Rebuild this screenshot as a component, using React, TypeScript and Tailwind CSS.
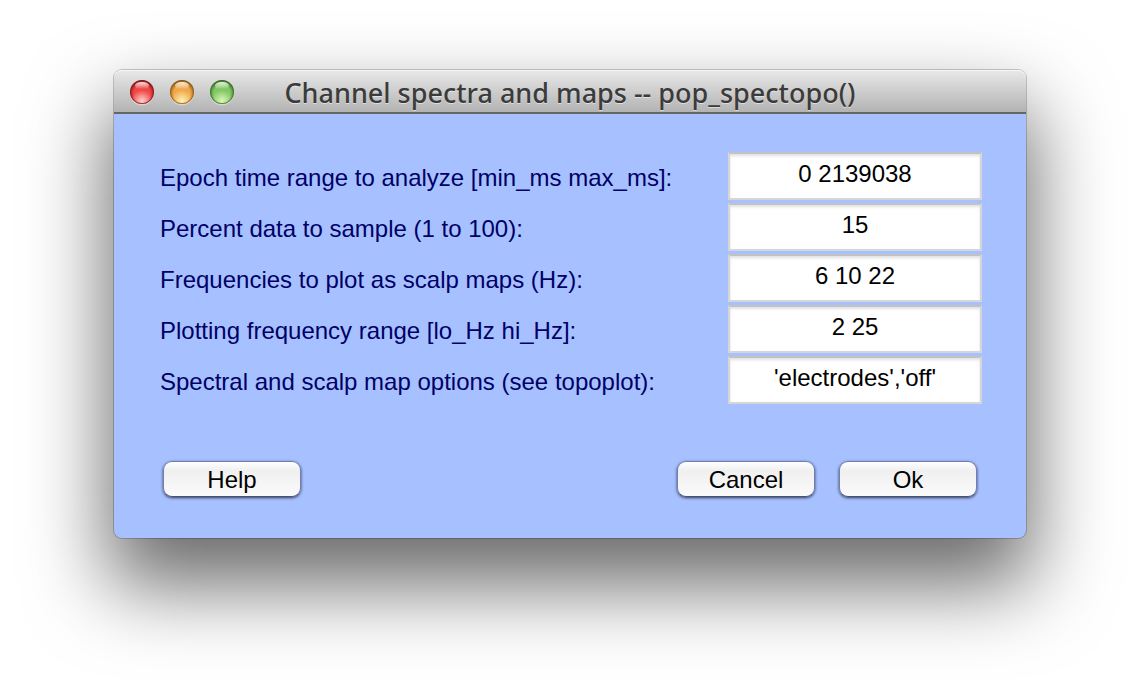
import React from "react";

type Light = { name: string; edge: string; mid: string; glow: string };

const lights: Light[] = [
  { name: "Close", edge: "#7d1212", mid: "#f04646", glow: "#ffd3d0" },
  { name: "Minimize", edge: "#85500f", mid: "#f0a94a", glow: "#fff3b8" },
  { name: "Zoom", edge: "#33661f", mid: "#82c765", glow: "#dcf8b8" },
];

const fields = [
  { id: "range", label: "Epoch time range to analyze [min_ms max_ms]:", value: "0 2139038" },
  { id: "percent", label: "Percent data to sample (1 to 100):", value: "15" },
  { id: "maps", label: "Frequencies to plot as scalp maps (Hz):", value: "6 10 22" },
  { id: "freq", label: "Plotting frequency range [lo_Hz hi_Hz]:", value: "2 25" },
  { id: "options", label: "Spectral and scalp map options (see topoplot):", value: "'electrodes','off'" },
];

function WindowLight({ name, edge, mid, glow }: Light) {
  return (
    <button type="button" aria-label={name} className="size-6">
      <svg viewBox="0 0 24 24" className="size-6 overflow-visible">
        <defs>
          <radialGradient id={`${name}-body`} cx="12" cy="13.5" r="13.5" gradientUnits="userSpaceOnUse">
            <stop offset="0.62" stopColor={mid} />
            <stop offset="1" stopColor={edge} />
          </radialGradient>
          <radialGradient id={`${name}-glow`} cx="12" cy="21" r="11" gradientUnits="userSpaceOnUse">
            <stop offset="0" stopColor={glow} />
            <stop offset="1" stopColor={glow} stopOpacity="0" />
          </radialGradient>
          <linearGradient id={`${name}-shine`} x1="0" y1="2" x2="0" y2="9" gradientUnits="userSpaceOnUse">
            <stop offset="0" stopColor="#fff" stopOpacity="0.9" />
            <stop offset="1" stopColor="#fff" stopOpacity="0" />
          </linearGradient>
        </defs>
        <circle cx="12" cy="13.5" r="12" fill="#fff" opacity="0.35" />
        <circle cx="12" cy="12" r="12" fill={`url(#${name}-body)`} />
        <circle cx="12" cy="12.3" r="11" fill={`url(#${name}-glow)`} />
        <circle cx="12" cy="12" r="11.6" fill="none" stroke={edge} strokeWidth="0.8" opacity="0.6" />
        <ellipse cx="12" cy="5.8" rx="7" ry="3.8" fill={`url(#${name}-shine)`} />
      </svg>
    </button>
  );
}

function PushButton({ children }: { children: React.ReactNode }) {
  return (
    <button
      type="button"
      className="h-9 w-[138px] rounded-[9px] border border-[#6f7fb0] border-b-[#4a5470] bg-linear-to-b from-white via-[#f0f0f0] via-25% to-[#fafafa] pt-px text-2xl leading-none text-black shadow-[0_1px_3px_rgba(20,25,50,0.8)]"
    >
      {children}
    </button>
  );
}

export default function App() {
  return (
    <main className="min-h-screen overflow-hidden bg-white px-[114px] py-[70px] font-['Liberation_Sans',Arial,sans-serif]">
      <section className="rounded-lg bg-[#a7c0ff] shadow-[0_0_0_1px_rgba(0,0,0,0.2),0_42px_80px_6px_rgba(0,0,0,0.58)]">
        <header className="grid h-11 grid-cols-[1fr_auto_1fr] items-center rounded-t-lg border-b-2 border-[#666763] bg-linear-to-b from-[#e9e9e9] to-[#b3b3b3] px-4 pt-0.5 shadow-[inset_0_1px_0_#f6f6f6]">
          <div className="flex gap-4">
            {lights.map((light) => (
              <WindowLight key={light.name} {...light} />
            ))}
          </div>
          <h1 className="font-['Noto_Sans',sans-serif] text-[27px] leading-none font-medium whitespace-nowrap text-[#3b3b3b] [text-shadow:0_1px_0_rgba(255,255,255,0.5)]">
            Channel spectra and maps -- pop_spectopo()
          </h1>
        </header>
        <form className="pt-[38px] pb-[41px]" onSubmit={(e) => e.preventDefault()}>
          <div className="flex flex-col gap-[3px] pr-11 pl-[46px]">
            {fields.map(({ id, label, value }) => (
              <div key={id} className="flex items-center justify-between">
                <label htmlFor={id} className="pt-1 text-2xl leading-7 whitespace-nowrap text-[#000066]">
                  {label}
                </label>
                <input
                  id={id}
                  type="text"
                  defaultValue={value}
                  className="h-12 w-[254px] border-2 border-[#d6d6d6] border-t-[#c2c2c2] bg-white pb-1 text-center text-2xl text-black shadow-[inset_0_2px_3px_rgba(0,0,0,0.12)] outline-none"
                />
              </div>
            ))}
          </div>
          <div className="mt-[57px] flex gap-6 pr-[49px] pl-[49px]">
            <PushButton>Help</PushButton>
            <div className="ml-auto flex gap-6">
              <PushButton>Cancel</PushButton>
              <PushButton>Ok</PushButton>
            </div>
          </div>
        </form>
      </section>
    </main>
  );
}
